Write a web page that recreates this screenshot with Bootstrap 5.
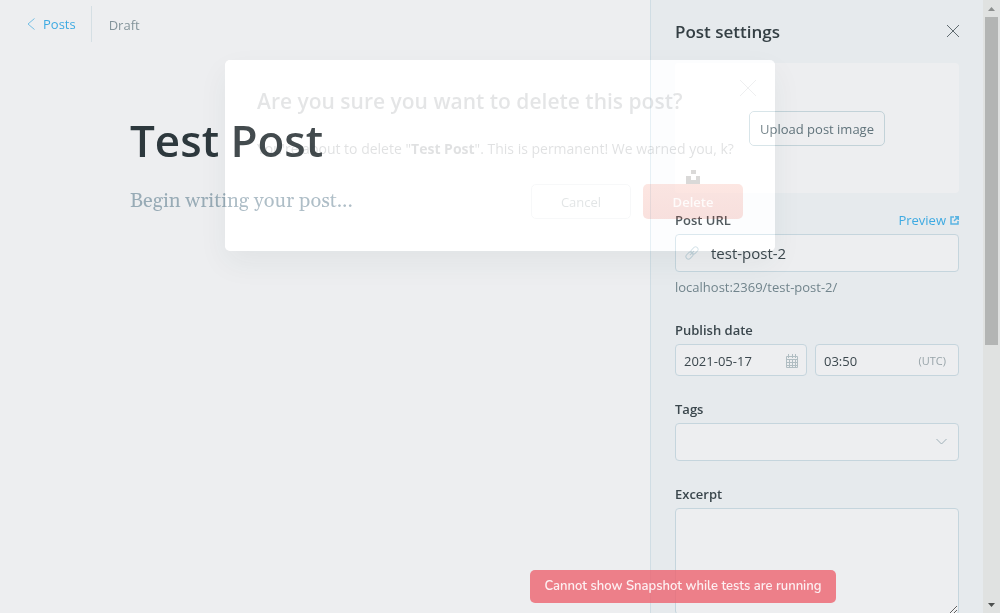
<!DOCTYPE html>
<html lang="en">
<head>
<meta charset="utf-8">
<meta name="viewport" content="width=device-width, initial-scale=1">
<title>Post editor</title>
<link href="https://cdn.jsdelivr.net/npm/bootstrap@5.3.0/dist/css/bootstrap.min.css" rel="stylesheet">
<style>
  body { font-family: "Open Sans", "Noto Sans", sans-serif; font-size: 13px; line-height: 20px; color: #3b474d; background: #edeef0; }
  a { color: #3eaae2; text-decoration: none; }
  svg { display: block; flex: none; }
  .app-shell { min-height: 100vh; height: 100vh; overflow: hidden; background: #edeef0; }
  .top-bar { height: 48px; padding: 6px 0 6px 26px; }
  .top-bar .back-link { padding-right: 15px; border-right: 1px solid #d5dfe4; gap: 7px; height: 36px; }
  .status-text { padding: 2px 0 0 17px; color: #84949b; }
  .editor-area { padding: 57px 130px 0; }
  .editor-area input, .editor-area textarea { background: none; border: 0; outline: 0; padding: 0; resize: none; }
  .post-title { font-size: 44px; line-height: 70px; font-weight: 600; color: #2d383d; }
  .post-body { font-family: Gelasio, Georgia, "Liberation Serif", serif; font-size: 20px; line-height: 32px; margin-top: 10px; height: 200px; }
  .post-body::placeholder { color: #98abb6; opacity: 1; }

  .settings-panel { flex: 0 0 350px; min-width: 0; background: #e6eaed; border-left: 1px solid #d0dde4; }
  .panel-content { padding: 0 24px; min-width: 0; }
  .panel-head { height: 63px; }
  .panel-head h2 { font-size: 17px; line-height: 24px; font-weight: 600; color: #343f44; }
  .plain-btn { background: none; border: 0; padding: 0; }
  .image-box { height: 130px; margin-bottom: 17px; background: #edeef0; border-radius: 4px; }
  .upload-btn { height: 35px; width: 136px; background: none; border: 1px solid #c2d2d8; border-radius: 5px; color: #60737b; padding: 1px 0 0; }
  .credit-mark { position: absolute; left: 11px; bottom: 9px; }
  .field-group { margin-bottom: 23px; }
  .field-group label { font-size: 13px; font-weight: 600; display: block; }
  .label-row { margin-bottom: 4px; }
  .field { height: 38px; background-color: #edeef0; border: 1px solid #c5d5dd; border-radius: 4px; color: #3b474d; }
  .field:focus-within { border-color: #3eaae2; }
  .field input { width: 0; min-width: 0; flex: 1; border: 0; outline: 0; background: none; padding: 0; color: inherit; }
  .url-field { padding: 0 9px; gap: 12px; font-size: 15px; }
  .short-field { height: 32px; padding: 1px 8px 0; font-size: 13px; }
  .date-field { flex: 0 0 132px; }
  .zone-text { font-size: 11px; color: #98a4a9; padding-right: 4px; }
  .help-text { margin-top: 6px; line-height: 19px; color: #71848c; }
  .tag-select { width: 100%; appearance: none; padding: 0 36px 0 10px; }
  .tag-arrow { position: absolute; right: 12px; top: 15px; pointer-events: none; }
  .excerpt { width: 100%; height: 107px; display: block; padding: 8px; }
  .scroll-track { width: 17px; flex: none; background: #e0e2e1; padding: 0 2px; }
  .scroll-thumb { height: 328px; width: 13px; background: #b3b5b4; }
  .arrow-cell { height: 17px; }

  /* The dialog is caught part way through its fade, so it brightens what lies under it. */
  .dialog-layer { position: absolute; inset: 60px 0 auto; pointer-events: none; }
  .confirm-box { position: relative; width: 550px; padding: 27px 32px 32px; border-radius: 5px; box-shadow: 0 12px 30px rgba(40,60,60,.06); pointer-events: auto; }
  .confirm-box::before { content: ""; position: absolute; inset: 0; border-radius: 5px; background: #161311; mix-blend-mode: plus-lighter; }
  .confirm-box > * { position: relative; }
  .confirm-box h1 { font-size: 21px; line-height: 28px; font-weight: 600; color: rgba(45,56,61,.13); margin-bottom: 23px; }
  .confirm-box p { font-size: 14px; line-height: 22px; color: rgba(45,56,61,.15); margin-bottom: 24px; white-space: nowrap; }
  .confirm-box .plain-btn.dismiss { position: absolute; right: 19px; top: 20px; }
  .dialog-actions { gap: 12px; }
  .dialog-btn { width: 100px; height: 35px; border-radius: 5px; background: none; border: 1px solid rgba(100,120,130,.05); color: rgba(60,80,85,.15); padding: 0; }
  .dialog-btn.danger { border: 0; color: rgba(255,255,255,.85); font-weight: 600; background: linear-gradient(rgba(238,80,50,.14), rgba(220,55,35,.15)); }
  .notice { position: absolute; right: 164px; bottom: 10px; width: 306px; height: 33px; border-radius: 5px; background: rgba(236,99,111,.8); color: #fdf0f2; font: 600 13px/32px Nunito, Mulish, Lato, sans-serif; text-align: center; white-space: nowrap; }
</style>
</head>
<body>
<div class="app-shell d-flex">
  <main class="flex-grow-1">
    <header class="top-bar d-flex align-items-center">
      <a href="#" class="back-link d-flex align-items-center">
        <svg width="10" height="14" viewBox="0 0 10 14" fill="none" stroke="#75bfe5"><path d="M8.500 1.500 2 7l6.500 5.500"/></svg>
        <span>Posts</span>
      </a>
      <span class="status-text">Draft</span>
    </header>
    <section class="editor-area">
      <input class="post-title w-100 d-block" aria-label="Post title" value="Test Post">
      <textarea class="post-body w-100 d-block" aria-label="Post body" placeholder="Begin writing your post..."></textarea>
    </section>
  </main>

  <aside class="settings-panel d-flex">
    <div class="panel-content flex-grow-1">
      <div class="panel-head d-flex align-items-center justify-content-between">
        <h2 class="m-0">Post settings</h2>
        <button type="button" class="plain-btn" aria-label="Close settings"><svg width="12" height="14" viewBox="0 0 12 14" fill="none" stroke="#606b70" overflow="visible"><path d="M0 0l12 12M12 0 0 12"/></svg></button>
      </div>
      <div class="image-box position-relative d-flex align-items-center justify-content-center">
        <button type="button" class="upload-btn">Upload post image</button>
        <svg class="credit-mark" width="14" height="14" fill="#c4c6c7"><path d="M5 0h5v4H5zM0 6h5v4h5V6h4v8H0z"/></svg>
      </div>
      <div class="field-group">
        <div class="label-row d-flex justify-content-between align-items-center">
          <label for="url">Post URL</label>
          <a href="#" class="d-flex align-items-center gap-1">Preview
            <svg width="9" height="9" viewBox="0 0 9 9" fill="none" stroke="#5ab4e2" stroke-width="1.500"><path d="M4 1H1v7h7V5M5 .75h3.250V4M8 1 4 5"/></svg></a>
        </div>
        <div class="field url-field d-flex align-items-center">
          <svg width="14" height="14" viewBox="0 0 14 14" fill="none" stroke="#bfd0d8"><g transform="rotate(-45 7 7)"><rect x="-.5" y="4.500" width="8" height="5" rx="2.500"/><rect x="6.500" y="4.500" width="8" height="5" rx="2.500"/><path d="M4 7h6"/></g></svg>
          <input id="url" value="test-post-2">
        </div>
        <div class="help-text">localhost:2369/test-post-2/</div>
      </div>
      <div class="field-group">
        <label class="label-row" for="pub-date">Publish date</label>
        <div class="d-flex gap-2">
          <div class="field short-field date-field d-flex align-items-center">
            <input id="pub-date" value="2021-05-17">
            <svg width="12" height="14" viewBox="0 0 12 14" fill="none" stroke="#b0bdc2"><path d="M.5 2.500h11v11H.5zM.5 5.500h11M.5 8.500h11M.5 11.500h11M3.500 5.500v8M6.500 5.500v8M9.500 5.500v8M2.500 0v4M6.500 0v4M9.500 0v4"/></svg>
          </div>
          <div class="field short-field d-flex align-items-center flex-grow-1">
            <input aria-label="Publish time" value="03:50">
            <span class="zone-text">(UTC)</span>
          </div>
        </div>
      </div>
      <div class="field-group">
        <label class="label-row" for="tags">Tags</label>
        <div class="position-relative">
          <select id="tags" class="field tag-select d-block"><option></option></select>
          <svg class="tag-arrow" width="11" height="8" fill="none" stroke="#9fb0b8"><path d="M.5 1l5 5 5-5"/></svg>
        </div>
      </div>
      <div class="field-group">
        <label class="label-row" for="excerpt">Excerpt</label>
        <textarea id="excerpt" class="field excerpt"></textarea>
      </div>
    </div>
    <div class="scroll-track d-flex flex-column" aria-hidden="true">
      <div class="arrow-cell d-flex align-items-center justify-content-center"><svg width="7" height="4" fill="#8c8f8e"><path d="M0 4 3.500 0 7 4z"/></svg></div>
      <div class="scroll-thumb"></div>
      <div class="arrow-cell mt-auto d-flex align-items-center justify-content-center"><svg width="7" height="4" fill="#4d504f"><path d="M0 0h7L3.500 4z"/></svg></div>
    </div>
  </aside>
</div>

<div class="dialog-layer d-flex justify-content-center">
  <div class="confirm-box" role="dialog" aria-labelledby="confirm-title">
    <h1 id="confirm-title">Are you sure you want to delete this post?</h1>
    <button type="button" class="plain-btn dismiss" aria-label="Close"><svg width="16" height="16" fill="none" stroke="#eeeff0"><path d="M0 0l16 16M16 0 0 16"/></svg></button>
    <p>You're about to delete "<strong>Test Post</strong>". This is permanent! We warned you, k?</p>
    <div class="dialog-actions d-flex justify-content-end">
      <button type="button" class="dialog-btn">Cancel</button>
      <button type="button" class="dialog-btn danger">Delete</button>
    </div>
  </div>
</div>
<div class="notice" role="status">Cannot show Snapshot while tests are running</div>
<script src="https://cdn.jsdelivr.net/npm/bootstrap@5.3.0/dist/js/bootstrap.bundle.min.js"></script>
</body>
</html>
